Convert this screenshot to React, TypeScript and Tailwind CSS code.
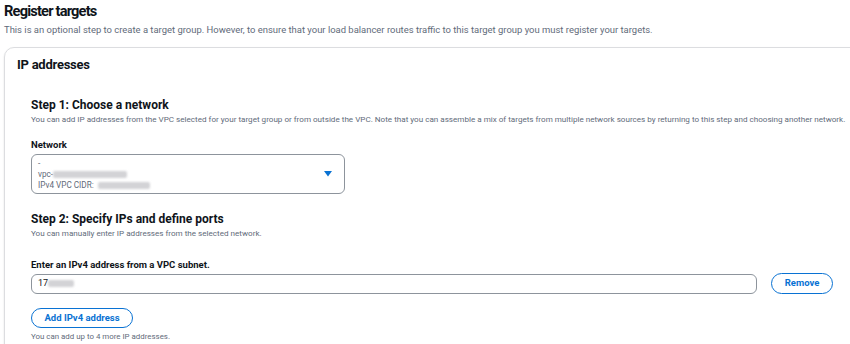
import React from "react";

function Blur({ w }: { w: number }) {
  return (
    <span
      className="inline-block h-[7px] align-middle rounded-[2px] bg-[#d3d3d6] blur-[0.8px]"
      style={{ width: w }}
    />
  );
}

export default function App() {
  return (
    <div
      className="w-[850px] h-[344px] overflow-hidden bg-white pl-[4px] text-[#0f141a]"
      style={{ fontFamily: "Roboto, 'Liberation Sans', sans-serif" }}
    >
      <h1 className="text-[14.6px] leading-[22px] font-bold tracking-[-0.8px]">Register targets</h1>
      <p className="mt-[1px] text-[9.45px] leading-[14px] text-[#5f6b7a]">
        This is an optional step to create a target group. However, to ensure that your load balancer routes traffic to this target group you must register your targets.
      </p>
      <div className="mt-[10px] w-[880px] h-[320px] rounded-[10px] border border-[#dcdde0] shadow-[0_1px_2px_rgba(0,7,22,0.12)] pl-[12px] pt-[8px]">
        <h2 className="text-[13px] leading-[18px] font-bold tracking-[-0.25px]">IP addresses</h2>
        <div className="pl-[14px]">
          <h3 className="mt-[23px] text-[12px] leading-[16px] font-bold">Step 1: Choose a network</h3>
          <p className="text-[8.1px] leading-[12px] text-[#5f6b7a] whitespace-nowrap">
            You can add IP addresses from the VPC selected for your target group or from outside the VPC. Note that you can assemble a mix of targets from multiple network sources by returning to this step and choosing another network.
          </p>
          <div className="mt-[13px] text-[9.5px] leading-[14px] font-bold">Network</div>
          <div className="mt-[2px] w-[314px] h-[40px] rounded-[6px] border border-[#8d949c] flex items-center justify-between pl-[6px] pr-[12px]">
            <div className="flex flex-col text-[8.2px] leading-[11px] text-[#5f6b7a]">
              <span>-</span>
              <span className="flex items-center">vpc-<Blur w={74} /></span>
              <span className="flex items-center">IPv4 VPC CIDR:&nbsp;&nbsp;<Blur w={52} /></span>
            </div>
            <svg width="8" height="6" viewBox="0 0 8 6">
              <path d="M0 0 H8 L4 5.5 Z" fill="#0972d3" />
            </svg>
          </div>
          <h3 className="mt-[17px] text-[12px] leading-[16px] font-bold">Step 2: Specify IPs and define ports</h3>
          <p className="text-[8.1px] leading-[12px] text-[#5f6b7a]">
            You can manually enter IP addresses from the selected network.
          </p>
          <div className="mt-[19px] text-[9.5px] leading-[14px] font-bold">Enter an IPv4 address from a VPC subnet.</div>
          <div className="mt-[1px] flex items-center gap-[14px] h-[21px]">
            <div className="w-[726px] h-[20px] rounded-[6px] border border-[#8d949c] flex items-center pl-[6px] text-[9px]">
              <span>17</span>
              <Blur w={26} />
            </div>
            <button className="w-[62px] h-[21px] rounded-full border-[1.5px] border-[#0972d3] text-[#0972d3] text-[9.5px] font-bold flex items-center justify-center">
              Remove
            </button>
          </div>
          <button className="mt-[14px] w-[102px] h-[20px] rounded-full border-[1.5px] border-[#0972d3] text-[#0972d3] text-[9.5px] font-bold flex items-center justify-center">
            Add IPv4 address
          </button>
          <p className="mt-[3px] text-[7.9px] leading-[12px] text-[#5f6b7a]">You can add up to 4 more IP addresses.</p>
        </div>
      </div>
    </div>
  );
}
